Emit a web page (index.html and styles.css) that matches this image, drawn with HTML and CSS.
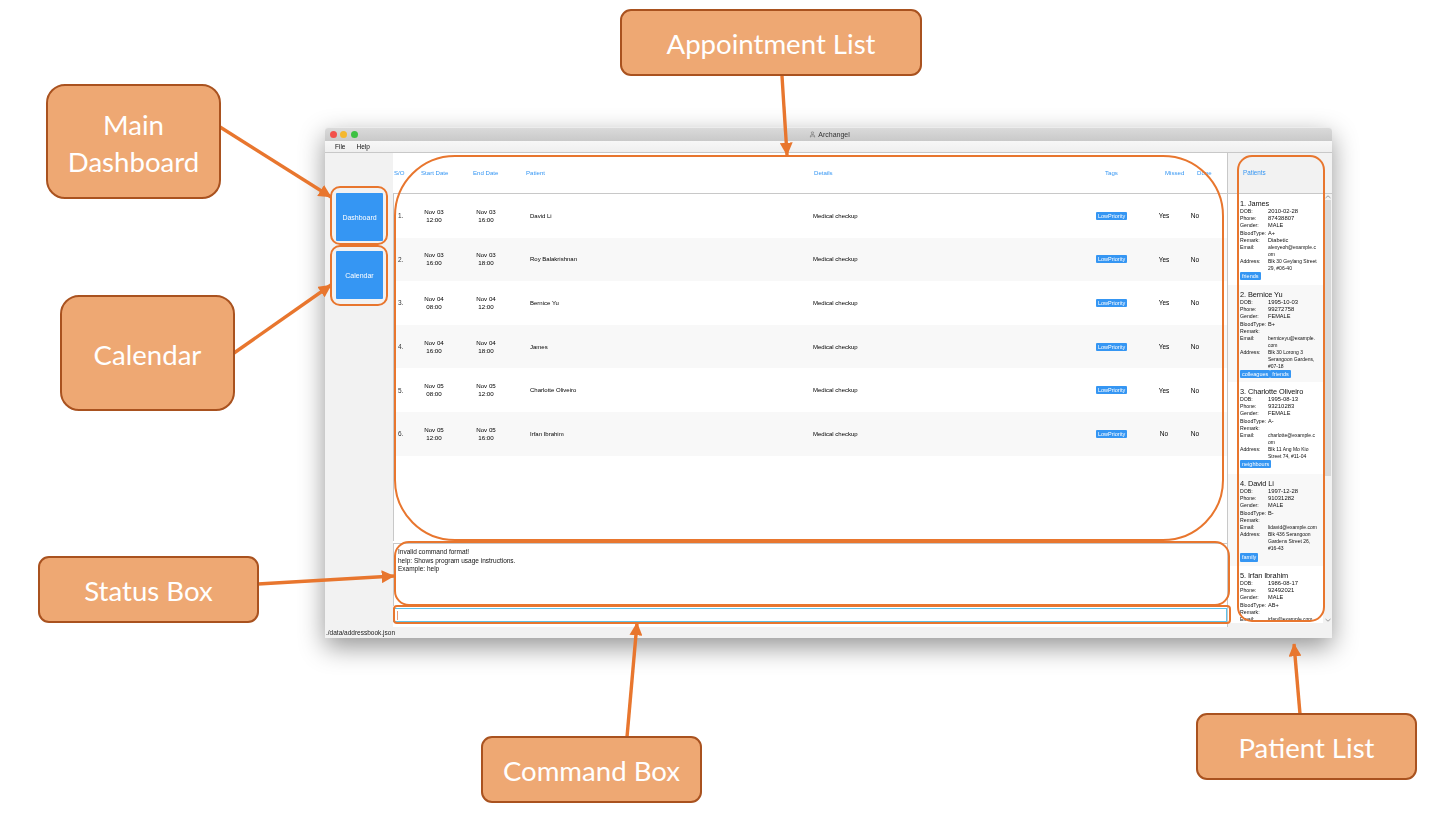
FILE: index.html
```html
<!DOCTYPE html>
<html lang="en">
<head>
    <meta charset="UTF-8">
    <title>Archangel - annotated UI</title>
    <link rel="stylesheet" href="styles.css">
</head>
<body>
    <div class="canvas">
        <div class="window">
            <div class="titlebar">
                <span class="light red"></span>
                <span class="light yellow"></span>
                <span class="light green"></span>
                <span class="title">
                    <svg class="app-icon" viewBox="0 0 8 8" width="7" height="7"><path d="M4 1 a1.2 1.2 0 1 1 -0.1 0 M1.5 7 C1.5 4.5 3 3.8 4 3.8 S6.5 4.5 6.5 7 C5.5 6 5 5.6 4 5.6 S2.5 6 1.5 7 Z" fill="none" stroke="#777" stroke-width="0.8"/></svg>
                    Archangel
                </span>
            </div>
            <div class="menubar"><span>File</span><span>Help</span></div>
            <div class="body">
                <aside class="sidebar">
                    <div class="navbtn first">Dashboard</div>
                    <div class="navbtn">Calendar</div>
                </aside>
                <main class="main">
                    <div class="thead">
                        <span>S/O</span>
                        <span>Start Date</span>
                        <span>End Date</span>
                        <span>Patient</span>
                        <span>Details</span>
                        <span>Tags</span>
                        <span>Missed</span>
                        <span>Done</span>
                    </div>
                    <div class="rows">
                        <div class="row">
                            <span class="c-no">1.</span>
                            <span class="c-date">Nov 03<br>12:00</span>
                            <span class="c-date">Nov 03<br>16:00</span>
                            <span class="c-patient">David Li</span>
                            <span>Medical checkup</span>
                            <span><b class="tag">LowPriority</b></span>
                            <span class="c-flag">Yes</span>
                            <span class="c-flag">No</span>
                        </div>
                        <div class="row">
                            <span class="c-no">2.</span>
                            <span class="c-date">Nov 03<br>16:00</span>
                            <span class="c-date">Nov 03<br>18:00</span>
                            <span class="c-patient">Roy Balakrishnan</span>
                            <span>Medical checkup</span>
                            <span><b class="tag">LowPriority</b></span>
                            <span class="c-flag">Yes</span>
                            <span class="c-flag">No</span>
                        </div>
                        <div class="row">
                            <span class="c-no">3.</span>
                            <span class="c-date">Nov 04<br>08:00</span>
                            <span class="c-date">Nov 04<br>12:00</span>
                            <span class="c-patient">Bernice Yu</span>
                            <span>Medical checkup</span>
                            <span><b class="tag">LowPriority</b></span>
                            <span class="c-flag">Yes</span>
                            <span class="c-flag">No</span>
                        </div>
                        <div class="row">
                            <span class="c-no">4.</span>
                            <span class="c-date">Nov 04<br>16:00</span>
                            <span class="c-date">Nov 04<br>18:00</span>
                            <span class="c-patient">James</span>
                            <span>Medical checkup</span>
                            <span><b class="tag">LowPriority</b></span>
                            <span class="c-flag">Yes</span>
                            <span class="c-flag">No</span>
                        </div>
                        <div class="row">
                            <span class="c-no">5.</span>
                            <span class="c-date">Nov 05<br>08:00</span>
                            <span class="c-date">Nov 05<br>12:00</span>
                            <span class="c-patient">Charlotte Oliveiro</span>
                            <span>Medical checkup</span>
                            <span><b class="tag">LowPriority</b></span>
                            <span class="c-flag">Yes</span>
                            <span class="c-flag">No</span>
                        </div>
                        <div class="row">
                            <span class="c-no">6.</span>
                            <span class="c-date">Nov 05<br>12:00</span>
                            <span class="c-date">Nov 05<br>16:00</span>
                            <span class="c-patient">Irfan Ibrahim</span>
                            <span>Medical checkup</span>
                            <span><b class="tag">LowPriority</b></span>
                            <span class="c-flag">No</span>
                            <span class="c-flag">No</span>
                        </div>
                    </div>
                    <div class="status">
                        <div>Invalid command format!</div>
                        <div>help: Shows program usage instructions.</div>
                        <div>Example: help</div>
                    </div>
                    <div class="command"><span class="caret"></span></div>
                </main>
                <section class="patients">
                    <div class="patients-head">Patients</div>
                    <div class="patients-scroll">
                        <div class="patient-list">
                            <div class="card">
                                <div class="pname">1. James</div>
                                <dl>
                                    <dt>DOB:</dt><dd class="num">2010-02-28</dd>
                                    <dt>Phone:</dt><dd class="num">87438807</dd>
                                    <dt>Gender:</dt><dd>MALE</dd>
                                    <dt>BloodType:</dt><dd>A+</dd>
                                    <dt>Remark:</dt><dd>Diabetic</dd>
                                    <dt>Email:</dt><dd class="long">alexyeoh@example.c<br>om</dd>
                                    <dt>Address:</dt><dd class="long">Blk 30 Geylang Street<br>29, #06-40</dd>
                                </dl>
                                <div class="ptags"><b class="tag">friends</b></div>
                            </div>
                            <div class="card">
                                <div class="pname">2. Bernice Yu</div>
                                <dl>
                                    <dt>DOB:</dt><dd class="num">1995-10-03</dd>
                                    <dt>Phone:</dt><dd class="num">99272758</dd>
                                    <dt>Gender:</dt><dd>FEMALE</dd>
                                    <dt>BloodType:</dt><dd>B+</dd>
                                    <dt>Remark:</dt><dd>&nbsp;</dd>
                                    <dt>Email:</dt><dd class="long">berniceyu@example.<br>com</dd>
                                    <dt>Address:</dt><dd class="long">Blk 30 Lorong 3<br>Serangoon Gardens,<br>#07-18</dd>
                                </dl>
                                <div class="ptags"><b class="tag">colleagues</b><b class="tag">friends</b></div>
                            </div>
                            <div class="card">
                                <div class="pname">3. Charlotte Oliveiro</div>
                                <dl>
                                    <dt>DOB:</dt><dd class="num">1995-08-13</dd>
                                    <dt>Phone:</dt><dd class="num">93210283</dd>
                                    <dt>Gender:</dt><dd>FEMALE</dd>
                                    <dt>BloodType:</dt><dd>A-</dd>
                                    <dt>Remark:</dt><dd>&nbsp;</dd>
                                    <dt>Email:</dt><dd class="long">charlotte@example.c<br>om</dd>
                                    <dt>Address:</dt><dd class="long">Blk 11 Ang Mo Kio<br>Street 74, #11-04</dd>
                                </dl>
                                <div class="ptags"><b class="tag">neighbours</b></div>
                            </div>
                            <div class="card">
                                <div class="pname">4. David Li</div>
                                <dl>
                                    <dt>DOB:</dt><dd class="num">1997-12-28</dd>
                                    <dt>Phone:</dt><dd class="num">91031282</dd>
                                    <dt>Gender:</dt><dd>MALE</dd>
                                    <dt>BloodType:</dt><dd>B-</dd>
                                    <dt>Remark:</dt><dd>&nbsp;</dd>
                                    <dt>Email:</dt><dd class="long">lidavid@example.com</dd>
                                    <dt>Address:</dt><dd class="long">Blk 436 Serangoon<br>Gardens Street 26,<br>#16-43</dd>
                                </dl>
                                <div class="ptags family"><b class="tag">family</b></div>
                            </div>
                            <div class="card">
                                <div class="pname">5. Irfan Ibrahim</div>
                                <dl>
                                    <dt>DOB:</dt><dd class="num">1986-08-17</dd>
                                    <dt>Phone:</dt><dd class="num">92492021</dd>
                                    <dt>Gender:</dt><dd>MALE</dd>
                                    <dt>BloodType:</dt><dd>AB+</dd>
                                    <dt>Remark:</dt><dd>&nbsp;</dd>
                                    <dt>Email:</dt><dd class="long">irfan@example.com</dd>
                                </dl>
                            </div>
                        </div>
                        <div class="scrollbar">
                            <svg class="sb-arrow" viewBox="0 0 8 6" width="8" height="6"><path d="M1.5 4 L4 1.8 L6.5 4" fill="none" stroke="#888" stroke-width="0.8"/></svg>
                            <div class="sb-track"><div class="sb-thumb"></div></div>
                            <svg class="sb-arrow" viewBox="0 0 8 6" width="8" height="6"><path d="M1.5 2 L4 4.2 L6.5 2" fill="none" stroke="#888" stroke-width="0.8"/></svg>
                        </div>
                    </div>
                </section>
            </div>
            <div class="statusbar">./data/addressbook.json</div>
        </div>

        <svg class="marks" width="1454" height="813" viewBox="0 0 1454 813">
            <defs>
                <marker id="head" viewBox="0 0 4 4" markerWidth="3.8" markerHeight="3.8" refX="3.8" refY="2" orient="auto">
                    <path d="M0 0 L4 2 L0 4 Z" fill="#e8762e"/>
                </marker>
            </defs>
            <g fill="none" stroke="#e8762e" stroke-width="2">
                <rect x="395" y="156" width="828" height="384" rx="60"/>
                <rect x="331" y="187" width="56" height="57" rx="9"/>
                <rect x="331" y="246" width="56" height="59" rx="9"/>
                <rect x="395" y="542" width="834" height="63" rx="14"/>
                <rect x="394" y="606" width="836" height="17" rx="3"/>
                <rect x="1238" y="156" width="86" height="465" rx="14"/>
            </g>
            <g stroke="#e8762e" stroke-width="3.4" marker-end="url(#head)">
                <line x1="782" y1="76" x2="787" y2="155"/>
                <line x1="220" y1="127" x2="331" y2="197"/>
                <line x1="234" y1="353" x2="331" y2="285"/>
                <line x1="258" y1="584" x2="394" y2="576"/>
                <line x1="627" y1="737" x2="637" y2="623"/>
                <line x1="1300" y1="714" x2="1294" y2="644"/>
            </g>
        </svg>

        <div class="callout c-appt">Appointment List</div>
        <div class="callout c-main">Main<br>Dashboard</div>
        <div class="callout c-cal">Calendar</div>
        <div class="callout c-status">Status Box</div>
        <div class="callout c-cmd">Command Box</div>
        <div class="callout c-plist">Patient List</div>
    </div>
</body>
</html>
```
FILE: styles.css
```css
html, body {
    margin: 0;
    padding: 0;
    background: #fff;
}
.canvas {
    position: relative;
    width: 1454px;
    height: 813px;
    overflow: hidden;
    font-family: "Liberation Sans", Arial, sans-serif;
    filter: blur(0.3px);
}

/* app window */
.window {
    position: absolute;
    left: 325px;
    top: 127px;
    width: 1007px;
    height: 511px;
    display: flex;
    flex-direction: column;
    background: #f2f2f2;
    border-radius: 4px 4px 0 0;
    box-shadow: 0 9px 26px rgba(0, 0, 0, 0.42);
    font-size: 6.5px;
    color: #111;
}
.titlebar {
    height: 14px;
    flex: none;
    display: flex;
    align-items: center;
    gap: 3.5px;
    padding-left: 4.5px;
    position: relative;
    border-radius: 4px 4px 0 0;
    border-top: 1px solid #ececec;
    box-sizing: border-box;
    background: linear-gradient(#dadada, #c9c9c9);
}
.light {
    width: 7px;
    height: 7px;
    border-radius: 50%;
}
.red { background: #f2504b; }
.yellow { background: #f5b82e; }
.green { background: #3dc143; }
.title {
    position: absolute;
    left: 0;
    right: 0;
    display: flex;
    justify-content: center;
    align-items: center;
    gap: 2px;
    padding-left: 2px;
    color: #333;
    font-size: 7px;
}
.menubar {
    height: 12px;
    flex: none;
    display: flex;
    align-items: center;
    gap: 11px;
    padding-left: 10px;
    background: linear-gradient(#f7f7f7, #efefef);
    border-bottom: 1px solid #c8c8c8;
    box-sizing: border-box;
}
.body {
    flex: 1;
    display: flex;
    min-height: 0;
}
.statusbar {
    height: 11px;
    flex: none;
    padding-left: 1px;
    line-height: 12px;
    color: #222;
}

/* sidebar */
.sidebar {
    width: 68px;
    flex: none;
    padding: 40px 0 0 11px;
    box-sizing: border-box;
}
.navbtn {
    width: 47px;
    height: 48px;
    margin-top: 10px;
    display: flex;
    align-items: center;
    justify-content: center;
    background: #3596f3;
    color: #fff;
    border-radius: 1px;
    font-size: 7px;
}
.navbtn.first {
    margin-top: 0;
}

/* appointment table */
.main {
    width: 834px;
    flex: none;
    display: flex;
    flex-direction: column;
    background: #fff;
}
.thead {
    height: 41px;
    flex: none;
    display: grid;
    grid-template-columns: 27px 52px 53px 288px 291px 60px 32px 1fr;
    align-items: center;
    padding: 0 0 1px 1px;
    box-sizing: border-box;
    border-bottom: 1px solid #c8c8c8;
    color: #3596f3;
    font-size: 6.1px;
}
.rows {
    height: 347px;
    flex: none;
    border-left: 1px solid #c8c8c8;
    box-sizing: border-box;
}
.row {
    height: 43.6px;
    display: grid;
    grid-template-columns: 14px 52px 52px 301px 283px 54px 28px 34px;
    align-items: center;
    font-size: 6px;
    color: #000;
}
.row:nth-child(even) {
    background: #f8f8f8;
}
.c-no {
    padding-left: 4px;
    font-size: 6.5px;
    color: #333;
}
.c-date {
    text-align: center;
    line-height: 8px;
    font-size: 6.2px;
}
.c-patient {
    padding-left: 18px;
}
.c-flag {
    text-align: center;
    font-size: 6.5px;
}
.tag {
    display: inline-block;
    background: #3596f3;
    color: #fff;
    font-weight: normal;
    font-size: 5.5px;
    line-height: 8px;
    padding: 0 2px;
    border-radius: 1px;
}
.status {
    height: 63px;
    flex: none;
    margin-top: 2px;
    padding: 4px 0 0 4px;
    box-sizing: border-box;
    border-top: 1px solid #c8c8c8;
    border-left: 1px solid #c8c8c8;
    line-height: 8.7px;
    font-size: 6.5px;
    color: #111;
}
.command {
    height: 14px;
    flex: none;
    margin-top: 2px;
    box-sizing: border-box;
    border: 1px solid #5fc1e8;
    display: flex;
    align-items: center;
    padding-left: 3px;
}
.caret {
    width: 1px;
    height: 9px;
    background: #e69a7a;
}

/* patient list */
.patients {
    flex: 1;
    display: flex;
    flex-direction: column;
    min-width: 0;
    height: 474px;
    border-left: 1px solid #c8c8c8;
    box-sizing: border-box;
}
.patients-head {
    height: 41px;
    flex: none;
    box-sizing: border-box;
    border-bottom: 1px solid #c8c8c8;
    padding: 16px 0 0 15px;
    color: #3596f3;
    font-size: 6.3px;
}
.patients-scroll {
    height: 429px;
    flex: none;
    display: flex;
    overflow: hidden;
}
.patient-list {
    flex: 1;
    min-width: 0;
    background: #fff;
}
.card {
    padding: 5px 0 0 12px;
    height: 91px;
    box-sizing: border-box;
    overflow: hidden;
}
.card:nth-child(even) {
    background: #f8f8f8;
}
.card:nth-child(2) { height: 97px; }
.card:nth-child(3) { height: 92px; }
.card:nth-child(4) { height: 92px; }
.pname {
    font-size: 7.4px;
    letter-spacing: -0.1px;
    line-height: 9px;
    color: #111;
}
dl {
    margin: 0;
    display: grid;
    grid-template-columns: 28px 1fr;
    font-size: 5.6px;
    line-height: 7.2px;
}
dt {
    margin: 0;
    font-size: 5.2px;
}
dd {
    margin: 0;
}
dd.num {
    font-size: 5.9px;
}
dd.long {
    font-size: 5px;
    line-height: 7px;
}
.ptags {
    display: flex;
}
.ptags.family .tag {
    line-height: 9px;
    margin-top: 1px;
}
.scrollbar {
    width: 9px;
    flex: none;
    display: flex;
    flex-direction: column;
    background: #f2f2f2;
}
.sb-arrow {
    flex: none;
    display: block;
    margin-left: 1px;
}
.sb-track {
    flex: 1;
    padding: 0 1px;
}
.sb-thumb {
    height: 276px;
    background: #d9d9d9;
}

/* annotations */
.marks {
    position: absolute;
    left: 0;
    top: 0;
}
.callout {
    position: absolute;
    display: flex;
    align-items: center;
    justify-content: center;
    text-align: center;
    box-sizing: border-box;
    padding-top: 2px;
    background: #eea873;
    border: 2px solid #a9521f;
    border-radius: 11px;
    color: #fff;
    font-family: Lato, "Open Sans", sans-serif;
    font-size: 27.6px;
    line-height: 37px;
}
.c-appt { left: 620px; top: 9px; width: 302px; height: 67px; }
.c-main { left: 46px; top: 84px; width: 175px; height: 115px; border-radius: 19px; }
.c-cal { left: 60px; top: 295px; width: 175px; height: 116px; border-radius: 19px; }
.c-status { left: 38px; top: 556px; width: 221px; height: 67px; }
.c-cmd { left: 481px; top: 736px; width: 221px; height: 67px; }
.c-plist { left: 1196px; top: 713px; width: 221px; height: 67px; }
```
